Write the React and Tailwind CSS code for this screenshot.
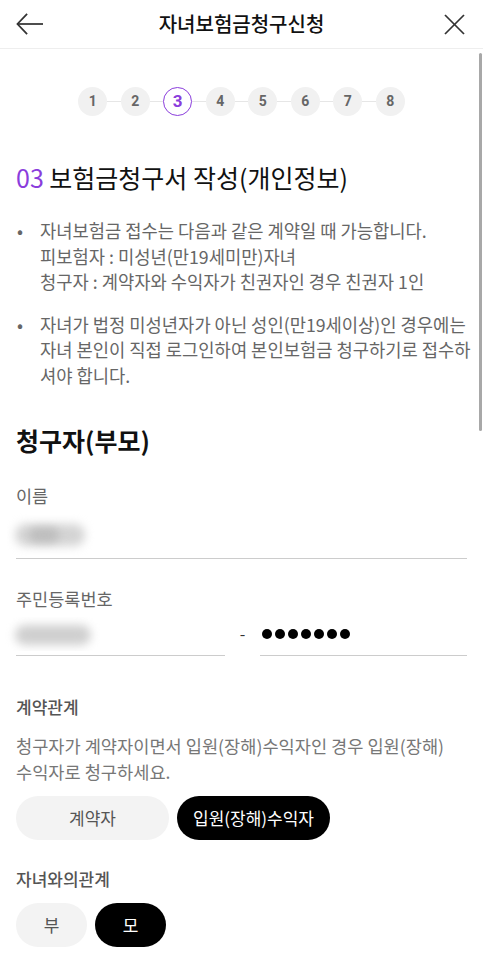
import { useState } from "react";

const steps = [1, 2, 3, 4, 5, 6, 7, 8];

function Stepper({ current }) {
  return (
    <div className="flex items-center justify-center">
      {steps.map((n, i) => (
        <div key={n} className="flex items-center">
          {i > 0 && <div className="h-px w-[13.5px] bg-[#e6e6e6]" />}
          {n === current ? (
            <div className="flex h-[29px] w-[29px] items-center justify-center rounded-full border-[1.5px] border-[#8a3ddc] bg-white font-['Roboto'] text-[17px] font-bold text-[#8a3ddc]">
              {n}
            </div>
          ) : (
            <div className="flex h-[29px] w-[29px] items-center justify-center rounded-full bg-[#f1f1f1] font-['Roboto'] text-[14px] font-bold text-[#666]">
              {n}
            </div>
          )}
        </div>
      ))}
    </div>
  );
}

function Pill({ label, active, onClick, className }) {
  return (
    <button
      onClick={onClick}
      className={
        "h-[44px] rounded-full text-[17px] " +
        (active ? "bg-black text-white " : "bg-[#f3f3f3] text-[#555] ") +
        className
      }
    >
      {label}
    </button>
  );
}

export default function App() {
  const [relation, setRelation] = useState("beneficiary");
  const [parent, setParent] = useState("mother");

  return (
    <div className="relative min-h-[966px] bg-white font-['Noto_Sans_CJK_KR','Noto_Sans',sans-serif]">
      {/* header */}
      <div className="flex h-[49px] items-center justify-between border-b border-[#eeeeee] px-4">
        <button className="flex h-6 w-7 items-center">
          <svg width="29" height="24" viewBox="0 0 29 24" fill="none" stroke="#333" strokeWidth="1.8">
            <path d="M1.5 12 H28" />
            <path d="M11.5 1.5 L1.5 12 L11.5 22.5" />
          </svg>
        </button>
        <h1 className="text-[20px] font-medium text-[#111]">자녀보험금청구신청</h1>
        <button className="flex h-6 w-7 items-center justify-end pr-[2px]">
          <svg width="21" height="21" viewBox="0 0 21 21" fill="none" stroke="#333" strokeWidth="1.7">
            <path d="M1 1 L20 20" />
            <path d="M20 1 L1 20" />
          </svg>
        </button>
      </div>

      {/* scroll indicator */}
      <div className="absolute right-[1px] top-[53px] h-[378px] w-[3px] rounded-full bg-[#a8a8a8]" />

      <div className="px-4 pt-[38px] pb-5">
        <Stepper current={3} />

        <h2 className="mt-[46px] text-[25px] leading-[30px] text-[#111]">
          <span className="text-[#8a3ddc]">03</span> 보험금청구서 작성(개인정보)
        </h2>

        <ul className="mt-[26px] mr-[-6px] space-y-[17px] text-[17.7px] leading-[25.5px] text-[#666]">
          <li className="flex">
            <span className="w-6 shrink-0 pl-[1px]">•</span>
            <p>
              자녀보험금 접수는 다음과 같은 계약일 때 가능합니다.
              <br />
              피보험자 : 미성년(만19세미만)자녀
              <br />
              청구자 : 계약자와 수익자가 친권자인 경우 친권자 1인
            </p>
          </li>
          <li className="flex">
            <span className="w-6 shrink-0 pl-[1px]">•</span>
            <p>
              자녀가 법정 미성년자가 아닌 성인(만19세이상)인 경우에는 자녀 본인이 직접 로그인하여 본인보험금 청구하기로 접수하셔야 합니다.
            </p>
          </li>
        </ul>

        <h3 className="mt-[36px] text-[25px] font-bold leading-[32px] text-[#111]">청구자(부모)</h3>

        <div className="mt-[28px]">
          <p className="text-[17.5px] leading-[24px] text-[#666]">이름</p>
          <div className="mt-[2px] flex h-[49px] items-center border-b border-[#cccccc]">
            <div className="relative ml-[-9px] h-[44px] w-[88px] overflow-hidden bg-white">
              <div className="absolute left-[8px] top-[12px] h-[22px] w-[70px] rounded-full bg-[#d4d4d4] blur-[5px]" />
              <div className="absolute left-[22px] top-[16px] h-[14px] w-[30px] rounded-full bg-[#bdbdbd] blur-[4px]" />
            </div>
          </div>
        </div>

        <div className="mt-[28px]">
          <p className="text-[17.5px] leading-[24px] text-[#666]">주민등록번호</p>
          <div className="mt-[2px] flex items-end">
            <div className="flex h-[43px] w-[209px] items-center border-b border-[#cccccc]">
              <div className="relative ml-[-11px] h-[34px] w-[95px] overflow-hidden bg-white">
                <div className="absolute left-[10px] top-[8px] h-[20px] w-[76px] rounded-full bg-[#cfcfcf] blur-[5px]" />
              </div>
            </div>
            <div className="flex h-[43px] w-[35px] items-center justify-center pb-[3px] text-[16px] text-[#333]">-</div>
            <div className="flex h-[43px] flex-1 items-center gap-[3px] border-b border-[#cccccc] pl-[2px]">
              {[0, 1, 2, 3, 4, 5, 6].map((i) => (
                <span key={i} className="h-[10px] w-[10px] rounded-full bg-black" />
              ))}
            </div>
          </div>
        </div>

        <div className="mt-[39px]">
          <p className="text-[17px] font-medium leading-[24px] text-[#555]">계약관계</p>
          <p className="mt-[14px] text-[17.6px] leading-[26px] text-[#777]">
            청구자가 계약자이면서 입원(장해)수익자인 경우 입원(장해)
            <br />
            수익자로 청구하세요.
          </p>
          <div className="mt-[11px] flex gap-2">
            <Pill
              label="계약자"
              active={relation === "contractor"}
              onClick={() => setRelation("contractor")}
              className="w-[153px]"
            />
            <Pill
              label="입원(장해)수익자"
              active={relation === "beneficiary"}
              onClick={() => setRelation("beneficiary")}
              className="w-[153px]"
            />
          </div>
        </div>

        <div className="mt-[27px]">
          <p className="text-[17px] font-medium leading-[24px] text-[#555]">자녀와의관계</p>
          <div className="mt-[12px] flex gap-2">
            <Pill label="부" active={parent === "father"} onClick={() => setParent("father")} className="w-[71px]" />
            <Pill label="모" active={parent === "mother"} onClick={() => setParent("mother")} className="w-[71px]" />
          </div>
        </div>
      </div>
    </div>
  );
}
